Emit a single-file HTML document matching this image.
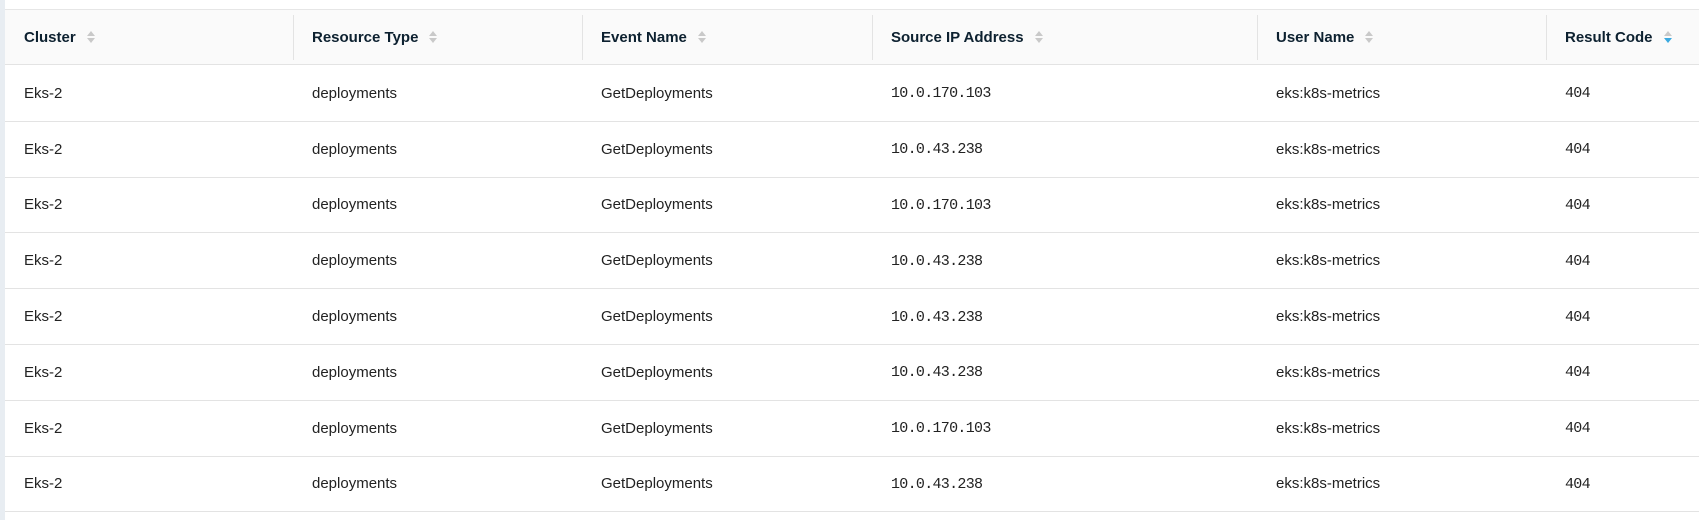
<!DOCTYPE html>
<html><head><style>
*{margin:0;padding:0;box-sizing:border-box}
body{width:1699px;height:520px;background:#fff;position:relative;overflow:hidden;font-family:"Liberation Sans",sans-serif}
.strip{position:absolute;left:0;top:0;width:5px;height:520px;background:#e8edf2}
.topline{position:absolute;left:5px;right:0;top:9px;height:1px;background:#e6e6e6}
.head{position:absolute;left:5px;right:0;top:10px;height:55px;background:#fafafa;border-bottom:1px solid #e3e3e3}
.row{position:absolute;left:5px;right:0;height:56px;border-bottom:1px solid #e3e3e3}
.c{position:absolute;top:0;height:100%;display:flex;align-items:center}
.h{font-weight:bold;font-size:15px;color:#0d2130}
.d{font-size:15px;color:#222}
.m{font-family:"Liberation Mono",monospace;font-size:15px;letter-spacing:-0.7px;color:#222;padding-top:1px}
.div{position:absolute;top:5px;height:45px;width:1px;background:#e3e3e3}
.sort{display:inline-block;margin-left:11px;width:8px;height:14px;position:relative}
.sort:before{content:"";position:absolute;left:0;top:1px;border-left:4px solid transparent;border-right:4px solid transparent;border-bottom:5px solid #c9c9c9}
.sort:after{content:"";position:absolute;left:0;top:8px;border-left:4px solid transparent;border-right:4px solid transparent;border-top:5px solid #c9c9c9}
.sort.act:after{border-top-color:#3aa9e0}
</style></head><body>
<div class="strip"></div>
<div class="topline"></div>
<div class="head">
<div class="c h" style="left:19px">Cluster<span class="sort"></span></div>
<div class="div" style="left:288px"></div>
<div class="c h" style="left:307px">Resource Type<span class="sort"></span></div>
<div class="div" style="left:577px"></div>
<div class="c h" style="left:596px">Event Name<span class="sort"></span></div>
<div class="div" style="left:867px"></div>
<div class="c h" style="left:886px">Source IP Address<span class="sort"></span></div>
<div class="div" style="left:1252px"></div>
<div class="c h" style="left:1271px">User Name<span class="sort"></span></div>
<div class="div" style="left:1541px"></div>
<div class="c h" style="left:1560px">Result Code<span class="sort act"></span></div>
</div>
<div id="rows"></div>
<script>
var ips=["10.0.170.103","10.0.43.238","10.0.170.103","10.0.43.238","10.0.43.238","10.0.43.238","10.0.170.103","10.0.43.238"];
var h="";
for(var i=0;i<8;i++){var t=66+i*55.8;
h+='<div class="row" style="top:'+t+'px;height:55.8px"><div class="c d" style="left:19px">Eks-2</div><div class="c d" style="left:307px">deployments</div><div class="c d" style="left:596px">GetDeployments</div><div class="c m" style="left:886px">'+ips[i]+'</div><div class="c d" style="left:1271px">eks:k8s-metrics</div><div class="c m" style="left:1560px">404</div></div>';}
document.getElementById("rows").innerHTML=h;
</script>
</body></html>
